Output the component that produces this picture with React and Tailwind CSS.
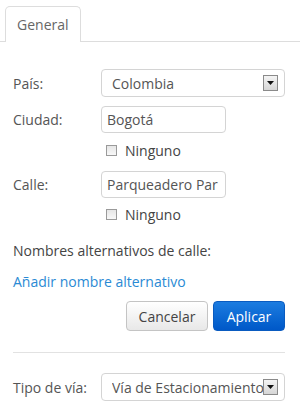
import React from 'react';

const font = { fontFamily: '"Open Sans", "Liberation Sans", sans-serif' };

function SelectBox({ value }) {
  return (
    <div className="flex h-[28px] w-[184px] items-center rounded-[4px] border border-[#d4d4d4] bg-white pl-[10px] pr-[6px]">
      <span className="flex-1 overflow-hidden whitespace-nowrap text-[14px] text-[#555]">{value}</span>
      <span className="flex h-[16px] w-[15px] shrink-0 items-center justify-center border border-[#8a8a8a] bg-gradient-to-b from-[#f4f4f4] to-[#d6d6d6]">
        <svg width="7" height="4" viewBox="0 0 7 4">
          <path d="M0 0h7L3.5 4z" fill="#111" />
        </svg>
      </span>
    </div>
  );
}

function Checkbox({ label }) {
  return (
    <div className="flex h-[18px] items-center pl-[93px]">
      <span className="h-[11px] w-[11px] border border-[#9a9a9a] bg-gradient-to-b from-[#e6e6e6] to-[#f8f8f8]" />
      <span className="ml-[8px] text-[14px] text-[#444]">{label}</span>
    </div>
  );
}

export default function App() {
  return (
    <div className="h-[411px] w-[300px] overflow-hidden bg-white" style={font}>
      {/* Tabs */}
      <div className="flex pt-[6px]">
        <div className="w-[5px] border-b border-[#ddd]" />
        <div className="flex h-[36px] w-[76px] items-center rounded-t-[5px] border border-b-0 border-[#ddd] pl-[11px] text-[14px] text-[#666]">
          General
        </div>
        <div className="flex-1 border-b border-[#ddd]" />
      </div>

      <div className="pl-[13px] pr-[15px]">
        <div className="mt-[27px] flex items-center">
          <span className="w-[88px] text-[14px] text-[#555]">País:</span>
          <SelectBox value="Colombia" />
        </div>

        <div className="mt-[9px] flex items-center">
          <span className="w-[88px] text-[14px] text-[#555]">Ciudad:</span>
          <div className="flex h-[27px] w-[125px] items-center rounded-[4px] border border-[#d4d4d4] px-[5px] text-[14px] text-[#555]">
            Bogotá
          </div>
        </div>
        <div className="mt-[8px]">
          <Checkbox label="Ninguno" />
        </div>

        <div className="mt-[12px] flex items-center">
          <span className="w-[88px] text-[14px] text-[#555]">Calle:</span>
          <div className="flex h-[27px] w-[125px] items-center overflow-hidden whitespace-nowrap rounded-[4px] border border-[#d4d4d4] px-[5px] text-[14px] text-[#555]">
            Parqueadero Par
          </div>
        </div>
        <div className="mt-[7px]">
          <Checkbox label="Ninguno" />
        </div>

        <div className="mt-[19px] h-[18px] text-[14px] leading-[18px] text-[#444]">Nombres alternativos de calle:</div>
        <div className="mt-[13px] h-[18px] text-[14px] leading-[18px] text-[#2a8ad4]">Añadir nombre alternativo</div>

        <div className="mt-[10px] flex justify-end gap-[5px]">
          <button className="h-[30px] w-[82px] rounded-[4px] border border-[#c4c4c4] bg-gradient-to-b from-[#ffffff] to-[#e8e8e8] text-[14px] text-[#444]">
            Cancelar
          </button>
          <button className="h-[30px] w-[72px] rounded-[4px] border border-[#0a5bc0] bg-gradient-to-b from-[#1c7ce0] to-[#0058c8] text-[14px] text-white">
            Aplicar
          </button>
        </div>

        <div className="mt-[21px] h-px bg-[#e2e2e2]" />

        <div className="mt-[20px] flex items-center">
          <span className="w-[88px] text-[14px] text-[#555]">Tipo de vía:</span>
          <SelectBox value="Vía de Estacionamiento" />
        </div>
      </div>
    </div>
  );
}
